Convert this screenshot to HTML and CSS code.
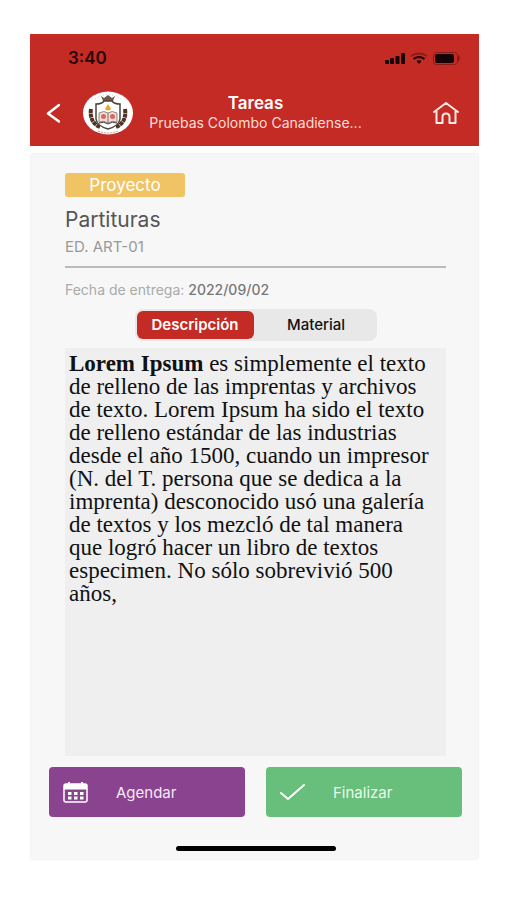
FILE: index.html
```html
<!DOCTYPE html>
<html lang="es">

<head>
  <meta charset="UTF-8" />
  <meta name="viewport" content="width=device-width, initial-scale=1.0" />
  <title>Tareas</title>
  <link rel="stylesheet" href="styles.css">
</head>

<body>
  <div class="phone">
    <header class="header">
      <div class="status">
        <span class="time">3:40</span>
        <svg class="status-icons" width="78" height="14" viewBox="0 0 78 14">
          <g fill="#160303">
            <rect x="0" y="9" width="4" height="4" rx="1" />
            <rect x="5" y="7" width="4" height="6" rx="1" />
            <rect x="10.500" y="5" width="4" height="8" rx="1" />
            <rect x="16" y="2" width="4" height="11" rx="1" />
            <path d="M31.500 10 Q34 8.500 36.500 10 L34 13 Z" />
            <rect x="50" y="3" width="19" height="9" rx="2" />
          </g>
          <path d="M26 5 Q34 0 42 5" fill="none" stroke="#8b1b17" stroke-width="2" />
          <path d="M28.500 8 Q34 4 39.500 8" fill="none" stroke="#160303" stroke-width="2" />
          <rect x="48.500" y="1.500" width="24" height="12" rx="3" fill="none" stroke="#8b1b17" />
          <path d="M73 4 Q77 7 73 11" fill="#8b1b17" />
        </svg>
      </div>
      <div class="nav">
        <button class="icon-btn back" type="button" aria-label="Volver">
          <svg width="14" height="20" viewBox="0 0 14 20">
            <path d="M13 2 L2 10.500 L13 18.500" fill="none" stroke="#fff" stroke-width="2.500" stroke-linecap="round" stroke-linejoin="round" />
          </svg>
        </button>
        <svg class="logo" width="52" height="44" viewBox="0 0 52 44">
          <ellipse cx="26" cy="22" rx="25" ry="21.500" fill="#fff" />
          <path d="M13 8 Q26 -1 39 8" fill="none" stroke="#c9c3bd" stroke-dasharray="1 2" />
          <!-- corona -->
          <path d="M19 5 L22 7 L26 4 L30 7 L33 5 L31 10 H21 Z" fill="#6b5a4b" />
          <!-- laureles -->
          <path d="M9 18 Q7 31 18 36" fill="none" stroke="#4f3426" stroke-width="4" stroke-dasharray="4 .5" />
          <path d="M43 18 Q45 31 34 36" fill="none" stroke="#4f3426" stroke-width="4" stroke-dasharray="4 .5" />
          <path d="M14 13 Q20 13 22 10 H30 Q32 13 38 13 V28 Q37 35 26 38 Q15 35 14 28 Z" fill="#fff" stroke="#4a4540" stroke-width="1.500" />
          <path d="M26 13 L29 18 Q26 21 23 18 Z" fill="#eba52a" />
          <path d="M17 22 Q22 19 26 22 Q30 19 35 22 V31 Q30 29 26 32 Q22 29 17 31 Z" fill="#f5ddd9" stroke="#77706b" stroke-width=".8" />
          <path d="M17 32 Q22 30 26 33 Q30 30 35 32" fill="none" stroke="#45413e" />
          <path d="M26 22 V32" stroke="#77706b" />
          <circle cx="21.500" cy="25.500" r="2.500" fill="#d9695e" />
          <circle cx="30.500" cy="25.500" r="2.500" fill="#d9695e" />
          <path d="M16 40 Q26 44 36 40" fill="none" stroke="#aaa39d" stroke-dasharray="2 1" />
        </svg>
        <div class="heading">
          <h1>Tareas</h1>
          <p>Pruebas Colombo Canadiense...</p>
        </div>
        <button class="icon-btn home" type="button" aria-label="Inicio">
          <svg width="26" height="22" viewBox="0 0 26 22">
            <path d="M1 10 L13 1 L25 10 M3.500 9 V21 H9.500 V15 Q9.500 11.500 13 11.500 Q16.500 11.500 16.500 15 V21 H22.500 V9" fill="none" stroke="#ffe9e6" stroke-width="2" stroke-linecap="round" stroke-linejoin="round" />
          </svg>
        </button>
      </div>
    </header>

    <main class="content">
      <div class="task">
        <span class="badge">Proyecto</span>
        <h2>Partituras</h2>
        <p class="code">ED. ART-01</p>
        <p class="date">Fecha de entrega: <b>2022/09/02</b></p>
        <div class="tabs">
          <button class="tab active" type="button">Descripción</button>
          <button class="tab" type="button">Material</button>
        </div>
        <div class="description">
          <b>Lorem Ipsum</b> es simplemente el texto<br>
          de relleno de las imprentas y archivos<br>
          de texto. Lorem Ipsum ha sido el texto<br>
          de relleno estándar de las industrias<br>
          desde el año 1500, cuando un impresor<br>
          (N. del T. persona que se dedica a la<br>
          imprenta) desconocido usó una galería<br>
          de textos y los mezcló de tal manera<br>
          que logró hacer un libro de textos<br>
          especimen. No sólo sobrevivió 500<br>
          años,
        </div>
      </div>
      <div class="actions">
        <button class="action schedule" type="button">
          <svg width="26" height="22" viewBox="0 0 26 22">
            <rect x="2" y="3" width="23" height="18" rx="2" fill="none" stroke="#fff" stroke-width="1.500" />
            <path d="M2 3 H25 V8.500 H2 Z M6 1 H8 V4 H6 Z M19 1 H21 V4 H19 Z" fill="#fff" />
            <path d="M6 12.500 H9.500 M12 12.500 H15.500 M18 12.500 H21.500 M6 17 H9.500 M12 17 H15.500 M18 17 H21.500" stroke="#fff" stroke-width="3" />
          </svg>
          <span>Agendar</span>
        </button>
        <button class="action finish" type="button">
          <svg width="26" height="22" viewBox="0 0 26 22">
            <path d="M2 12 L9 18 L25 4" fill="none" stroke="#fff" stroke-width="2" stroke-linecap="round" stroke-linejoin="round" />
          </svg>
          <span>Finalizar</span>
        </button>
      </div>
      <div class="home-bar"></div>
    </main>
  </div>
</body>

</html>
```
FILE: styles.css
```css
* {
  margin: 0;
  padding: 0;
  box-sizing: border-box;
}

body {
  min-height: 100vh;
  padding: 34px 28px 41px 30px;
  display: flex;
  background: #fff;
  font-family: Inter, "Liberation Sans", sans-serif;
}

button {
  border: 0;
  background: none;
  font-family: inherit;
  cursor: pointer;
}

.phone {
  flex: 1;
  display: flex;
  flex-direction: column;
}

.header {
  height: 112px;
  background: #c42b25;
  color: #fff;
}

.status {
  height: 48px;
  padding: 0 16px 0 38px;
  display: flex;
  align-items: center;
  justify-content: space-between;
}

.time {
  color: #2b0504;
  font-size: 17px;
  font-weight: 600;
}

.nav {
  height: 62px;
  padding: 0 20px 0 16px;
  display: flex;
  align-items: center;
}

.icon-btn svg,
.logo {
  display: block;
}

.logo {
  margin-left: 22px;
}

.heading {
  flex: 1;
  padding-right: 56px;
  text-align: center;
}

.heading h1 {
  font-size: 17px;
  line-height: 20px;
  font-weight: 600;
}

.heading p {
  color: #ffdcd8;
  font-size: 14px;
  line-height: 20px;
  white-space: nowrap;
}

.content {
  flex: 1;
  margin: 8px 1px 0;
  padding: 19px 16px 8px 18px;
  display: flex;
  flex-direction: column;
  background: #f7f7f7;
  box-shadow: 0 0 2px #ddd;
}

.task {
  flex: 1;
  padding: 0 16px;
  display: flex;
  flex-direction: column;
}

.badge {
  width: 120px;
  border-radius: 3px;
  background: #f0c365;
  color: #fff;
  font-size: 17px;
  line-height: 24px;
  text-align: center;
}

.task h2 {
  margin-top: 8px;
  color: #555;
  font-size: 21px;
  line-height: 30px;
  font-weight: 400;
}

.code {
  padding: 2px 0 9px;
  border-bottom: 2px solid #bbb;
  color: #999;
  font-size: 15px;
  line-height: 20px;
}

.date {
  margin: 12px 0 9px;
  color: #aaa;
  font-size: 14px;
  line-height: 20px;
}

.date b {
  color: #777;
  font-weight: 500;
}

.tabs {
  width: 242px;
  padding: 2px;
  align-self: center;
  display: flex;
  gap: 4px;
  border-radius: 8px;
  background: #e8e8e8;
}

.tab {
  flex: 1;
  border-radius: 6px;
  color: #111;
  font-size: 15px;
  line-height: 28px;
  font-weight: 500;
}

.tab.active {
  background: #c42b25;
  color: #fff;
  font-weight: 600;
}

.description {
  flex: 1;
  margin-top: 7px;
  padding: 4px;
  background: #efefef;
  color: #111;
  font-family: "Liberation Serif", serif;
  font-size: 23px;
  line-height: 23px;
}

.actions {
  margin-top: 11px;
  display: flex;
  gap: 21px;
}

.action {
  flex: 1;
  height: 50px;
  padding: 0 13px;
  display: flex;
  align-items: center;
  border-radius: 4px;
  color: #f6eaf6;
  font-size: 15px;
}

.action span {
  padding-left: 28px;
}

.schedule {
  background: #89438f;
}

.finish {
  background: #68be7b;
  color: #e9faea;
}

.home-bar {
  width: 160px;
  height: 5px;
  margin-top: 29px;
  align-self: center;
  border-radius: 3px;
  background: #000;
}
```
